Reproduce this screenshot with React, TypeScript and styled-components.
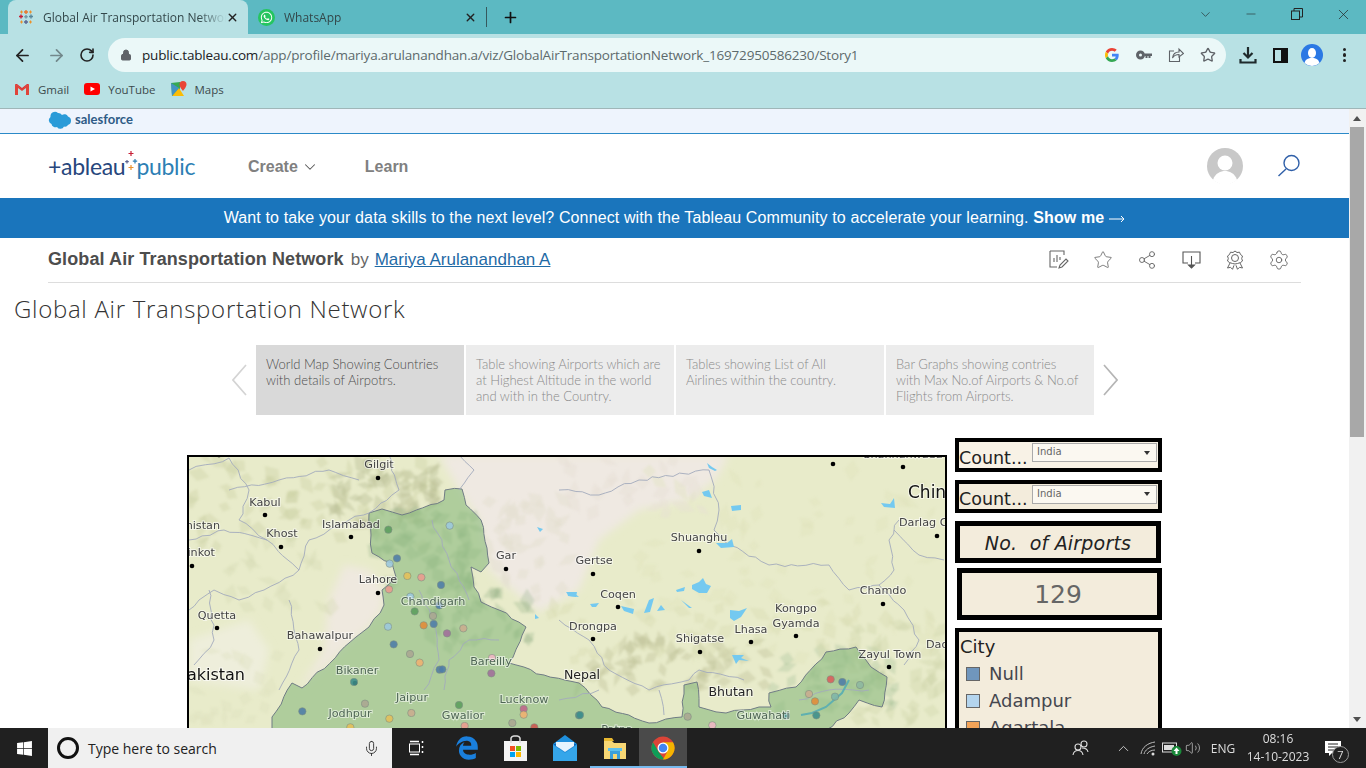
import React from "react";
import styled, { createGlobalStyle } from "styled-components";
import { ArrowLeft, ArrowRight, RotateCw, Lock, Star, X, Plus, ChevronDown, Minus, Mic, Share2, Settings, ChevronUp, Volume2 } from "lucide-react";
import { FaWindows, FaEdgeLegacy, FaWhatsapp } from "react-icons/fa";

const Global = createGlobalStyle`
  html, body { margin: 0; padding: 0; height: 768px; overflow: hidden; background: #fff; }
  * { box-sizing: border-box; }
  #root { font-family: "Open Sans", "Liberation Sans", sans-serif; }
`;

const Screen = styled.div`width:1366px;height:768px;display:flex;flex-direction:column;overflow:hidden;`;
const TabStrip = styled.div`height:34px;background:#5cb9c2;display:flex;align-items:stretch;padding-left:8px;flex:none;`;
const Tab = styled.div<{ $active?: boolean; $w: number }>`
  width:${p => p.$w}px;display:flex;align-items:center;padding:0 9px 0 10px;font-size:12px;color:#33474a;
  background:${p => (p.$active ? "#b8e1e4" : "transparent")};border-radius:8px 8px 0 0;
`;
const TabTitle = styled.span`flex:1;margin-left:9px;white-space:nowrap;overflow:hidden;-webkit-mask-image:linear-gradient(90deg,#000 85%,transparent);`;
const WaBadge = styled.span`width:17px;height:17px;border-radius:50%;background:#25c560;display:flex;align-items:center;justify-content:center;color:#fff;flex:none;`;
const TabSep = styled.div`width:1px;height:20px;background:#36595d;align-self:center;`;
const NewTab = styled.div`width:46px;display:flex;align-items:center;justify-content:center;color:#111;`;
const WinControls = styled.div`margin-left:auto;display:flex;align-items:flex-start;color:#222;`;
const WinBtn = styled.div`width:46px;height:28px;display:flex;align-items:center;justify-content:center;`;

const Toolbar = styled.div`height:42px;background:#b8e1e4;display:flex;align-items:center;flex:none;padding-left:3px;`;
const NavBtn = styled.div<{ $w: number; $c?: string }>`width:${p => p.$w}px;display:flex;justify-content:center;align-items:center;color:${p => p.$c ?? "#222"};flex:none;`;
const Omnibox = styled.div`width:1118px;height:34px;margin-left:6px;border-radius:17px;background:#ebf8f8;display:flex;align-items:center;padding-left:12px;flex:none;`;
const Url = styled.div`font-size:13.5px;color:#5d6a6c;margin-left:10px;flex:1;white-space:nowrap;letter-spacing:-.19px;b{font-weight:400;color:#202124;}`;
const OmniIcon = styled.div`width:32px;display:flex;justify-content:center;align-items:center;color:#5f6368;`;
const OmniIcons = styled.div`display:flex;margin-right:2px;`;
const ToolRight = styled.div`display:flex;margin-left:6px;`;
const Menu = styled.div`display:flex;flex-direction:column;gap:2px;span{width:3.5px;height:3.5px;border-radius:50%;background:#222;}`;

const Bookmarks = styled.div`height:33px;background:#b8e1e4;border-bottom:1px solid #9fb6b8;display:flex;align-items:center;padding:0 0 6px 14px;flex:none;font-size:11.5px;color:#3c4a4c;`;
const Bookmark = styled.div`display:flex;align-items:center;gap:8px;margin-right:15px;`;

const Viewport = styled.div`flex:1;display:flex;min-height:0;`;
const Page = styled.div`width:1349px;display:flex;flex-direction:column;overflow:hidden;background:#fff;`;
const Scrollbar = styled.div`width:17px;background:#f1f1f1;display:flex;flex-direction:column;align-items:center;padding:0 2px 0 1px;`;
const ArrowBtn = styled.div`height:18px;display:flex;align-items:center;justify-content:center;flex:none;width:100%;
  &::after{content:"";border-left:4px solid transparent;border-right:4px solid transparent;}`;
const ArrowUp = styled(ArrowBtn)`&::after{border-bottom:5px solid #505050;}`;
const ArrowDown = styled(ArrowBtn)`margin-top:auto;&::after{border-top:5px solid #505050;}`;
const Thumb = styled.div`width:100%;height:310px;background:#a8a8a8;flex:none;`;

const SfStrip = styled.div`height:25px;background:#eef4fd;border-bottom:1px solid #2b8ac8;padding-left:48px;display:flex;align-items:center;flex:none;gap:3px;`;
const SfText = styled.span`font:700 13px "Lato","Liberation Sans",sans-serif;color:#2e5b86;margin-top:-5px;`;
const SfCloud = styled.svg`margin-top:-3px;`;

const Nav = styled.div`height:64px;display:flex;align-items:center;padding-left:48px;flex:none;`;
const Logo = styled.div`width:200px;display:flex;align-items:center;font:400 23px "Lato","Open Sans",sans-serif;letter-spacing:-.3px;`;
const LogoA = styled.span`color:#27467c;`;
const LogoB = styled.span`color:#2d7fb4;`;
const SparkSvg = styled.svg`margin:-6px -4px 0 -3px;flex:none;`;
const NavLink = styled.div<{ $ml: number }>`margin-left:${p => p.$ml}px;padding-top:2px;font:700 16px "Liberation Sans",sans-serif;color:#808080;display:flex;align-items:center;gap:3px;svg{color:#555;}`;
const NavRight = styled.div`margin-left:auto;margin-right:48px;display:flex;align-items:center;gap:34px;`;
const Avatar = styled.svg`display:block;`;

const Banner = styled.div`height:40px;background:#1a75bc;color:#fff;display:flex;align-items:center;justify-content:center;font:400 16px "Liberation Sans",sans-serif;flex:none;letter-spacing:.12px;white-space:pre;b{margin-left:0;}`;
const BannerArrow = styled.svg`margin:2px 0 0 5px;`;
const TitleRow = styled.div`height:45px;margin:0 48px;width:1253px;border-bottom:1px solid #ddd;display:flex;align-items:center;flex:none;padding-bottom:1px;`;
const VizName = styled.div`font:700 18px "Liberation Sans",sans-serif;color:#4d4d4d;letter-spacing:.1px;`;
const By = styled.span`font:400 17px "Liberation Sans",sans-serif;color:#666;margin-left:7px;`;
const Author = styled.a`font:400 17px "Liberation Sans",sans-serif;color:#1f6aa5;text-decoration:underline;margin-left:6px;`;
const VizTools = styled.div`margin-left:auto;margin-right:12px;display:flex;gap:24px;color:#666;svg{display:block;}`;
const Gear = styled(Settings)`margin:-1px;`;

const StoryTitle = styled.div`height:52px;padding:0 0 2px 14px;display:flex;align-items:center;font:300 24px "Open Sans",sans-serif;color:#333;flex:none;letter-spacing:.7px;`;
const StoryNav = styled.div`height:70px;margin-top:10px;display:flex;align-items:center;padding-left:226px;gap:2px;flex:none;`;
const StoryArrow = styled.div`width:28px;display:flex;justify-content:center;`;
const StoryPoint = styled.div<{ $active?: boolean }>`width:208px;height:70px;padding:11px 10px 0;white-space:nowrap;background:${p => (p.$active ? "#d9d9d9" : "#ececec")};
  color:${p => (p.$active ? "#4d4d4d" : "#8a8a8a")};font:300 13px/16px "Lato","Open Sans",sans-serif;`;

const Dashboard = styled.div`flex:none;display:flex;align-items:flex-start;padding:23px 0 0 187px;`;
const MapFrame = styled.div`width:760px;height:300px;margin-top:17px;border:2px solid #000;flex:none;svg{display:block;}`;
const Side = styled.div`margin-left:8px;width:207px;display:flex;flex-direction:column;flex:none;`;
const Panel = styled.div<{ $h: number; $mt: number; $ml?: number; $w?: number; $bg?: string; $b?: number }>`
  height:${p => p.$h}px;margin-top:${p => p.$mt}px;margin-left:${p => p.$ml ?? 0}px;width:${p => p.$w ?? 207}px;
  border:${p => p.$b ?? 4}px solid #000;background:${p => p.$bg ?? "#f3ecdc"};display:flex;align-items:center;flex:none;
  font-family:"DejaVu Sans",sans-serif;color:#222;
`;
const FilterLabel = styled.span`font-size:17.5px;width:73px;flex:none;padding-top:5px;white-space:nowrap;`;
const Select = styled.div`width:125px;height:19px;border:1px solid #aaa;background:#fbf8f1;font-size:10px;color:#666;display:flex;align-items:center;justify-content:space-between;padding:0 6px 2px 4px;margin-top:-5px;
  &::after{content:"";border-left:3.5px solid transparent;border-right:3.5px solid transparent;border-top:4px solid #333;margin-top:2px;}`;
const CardTitle = styled.div`width:100%;text-align:center;font-style:italic;font-size:19px;letter-spacing:.2px;color:#222;white-space:pre;padding-top:1px;`;
const BigNum = styled.div`width:100%;text-align:center;font-size:25px;color:#666;padding-right:3px;`;
const Legend = styled(Panel)`flex-direction:column;align-items:flex-start;padding:2px 1px 0;`;
const LegendHead = styled.div`font-size:18px;line-height:26px;`;
const LegendRow = styled.div`display:flex;align-items:center;height:27px;padding-left:6px;gap:9px;font-size:18px;color:#45474f;`;
const Swatch = styled.span<{ $c: string }>`width:14px;height:14px;background:${p => p.$c};border:1px solid #666;flex:none;`;

const Taskbar = styled.div`height:40px;background:#202020;display:flex;align-items:stretch;flex:none;color:#fff;`;
const Cell = styled.div<{ $w: number; $active?: boolean; $line?: boolean }>`width:${p => p.$w}px;flex:none;display:flex;align-items:center;justify-content:center;
  background:${p => (p.$active ? "#4a4a4a" : "transparent")};box-shadow:${p => (p.$line ? "inset 0 -2px 0 #76b9ed" : "none")};`;
const SearchBox = styled.div`width:344px;background:#f0f0f0;display:flex;align-items:center;padding-left:9px;color:#222;font-size:14px;flex:none;`;
const SearchRing = styled.div`width:22px;height:22px;border:3px solid #111;border-radius:50%;margin-right:9px;`;
const SearchMic = styled.div`margin-left:auto;margin-right:12px;display:flex;`;
const Tray = styled.div`margin-left:auto;display:flex;align-items:center;`;
const TrayItem = styled.div<{ $w: number }>`width:${p => p.$w}px;display:flex;justify-content:center;align-items:center;font-size:12px;flex:none;color:#ddd;`;
const Clock = styled.div`width:70px;text-align:center;font-size:12px;line-height:18px;color:#ddd;`;
const NoteBadge = styled.div`position:absolute;right:-8px;bottom:-7px;width:17px;height:17px;border-radius:50%;border:1px solid #999;background:#222;font-size:11px;line-height:15px;text-align:center;color:#ddd;`;
const NoteWrap = styled.div`position:relative;display:flex;`;

let seed = 12345;
const rnd = () => { seed = (seed * 16807) % 2147483647; return seed / 2147483647; };
const parse = (s: string) => s.trim().split(/\s+/).map(p => p.split(",").map(Number));
const wiggle = (s: string, amp: number, step = 7) => {
  const pts = parse(s); const out: string[] = [];
  pts.forEach((p, i) => {
    out.push(p.join(","));
    const q = pts[i + 1]; if (!q) return;
    const d = Math.hypot(q[0] - p[0], q[1] - p[1]); const n = Math.floor(d / step);
    for (let k = 1; k < n; k++) {
      const t = k / n;
      out.push(`${(p[0] + (q[0] - p[0]) * t + (rnd() - .5) * amp * 2).toFixed(1)},${(p[1] + (q[1] - p[1]) * t + (rnd() - .5) * amp * 2).toFixed(1)}`);
    }
  });
  return out.join(" ");
};
type Facet = { d: string; c: string; o: number };
const zones: [number, number, number, number, number, string, number][] = [
  [190, 457, 250, 90, 70, "#c6cca0", .32],
  [330, 457, 110, 70, 50, "#b9bf95", .42],
  [230, 540, 110, 70, 22, "#d2d7ae", .3],
  [560, 640, 210, 50, 55, "#bcc196", .38],
  [370, 510, 110, 80, 45, "#7fa376", .25],
  [430, 590, 100, 60, 30, "#7fa376", .25],
  [770, 650, 130, 60, 40, "#7fa376", .2],
  [640, 470, 300, 190, 70, "#dfe3ba", .35],
  [540, 600, 400, 60, 40, "#d6dab0", .35],
  [850, 620, 96, 108, 40, "#cfd4a8", .35],
  [480, 500, 90, 100, 35, "#e3ddcf", .45],
  [560, 457, 150, 60, 25, "#e5dfd4", .4],
  [190, 650, 90, 78, 20, "#d9deb8", .3],
];
const facets: Facet[] = zones.flatMap(([x, y, w, h, n, c, o]) =>
  Array.from({ length: n }, () => {
    const cx = x + rnd() * w, cy = y + rnd() * h, a = rnd() * 3.14, l = 5 + rnd() * 8, t = 3 + rnd() * 5;
    const dx = Math.cos(a) * l, dy = Math.sin(a) * l, nx = -Math.sin(a) * t, ny = Math.cos(a) * t;
    return { d: `${(cx - dx).toFixed(1)},${(cy - dy).toFixed(1)} ${(cx + nx).toFixed(1)},${(cy + ny).toFixed(1)} ${(cx + dx).toFixed(1)},${(cy + dy).toFixed(1)} ${(cx - nx).toFixed(1)},${(cy - ny).toFixed(1)}`, c, o };
  }));

const dots: [number, number][] = [[379,478],[266,515],[282,547],[352,537],[193,566],[379,593],[218,628],[321,649],[507,569],[700,551],[594,574],[619,607],[594,639],[701,652],[752,642],[797,636],[884,604],[938,536],[834,464],[904,467],[890,667],[220,455],[356,683]];
const B="#4f7ea8",L="#9cc8dd",G="#5d9e5f",S="#e99c8f",T="#3f8f8c",Y="#e3c05b",TN="#c9ad8f",GR="#aaa793",P="#a0709a",PE="#eeb172";
const z6: [number, number, string][] = [[628,239,G],[812,227,L],[654,325,B],[632,341,L],[685,378,Y],[727,382,S],[786,405,B],[630,418,S],[694,440,L],[781,466,B],[707,484,G],[762,498,GR],[734,526,"#e08c3a"],[764,522,B],[627,530,L],[853,535,TN],[804,550,P],[644,583,B],[693,612,GR],[722,638,PE],[782,659,B],[790,658,B],[939,624,"#eeb7c4"],[937,670,P],[525,696,T],[558,761,GR],[370,784,B],[697,789,TN],[840,765,G],[631,806,Y],[1034,777,"#c0668b"],[1034,794,PE],[1000,819,GR],[857,828,S],[1066,832,"#c9564f"],[514,832,Y],[1200,796,T]];
const z7: [number, number, string][] = [[63,795,T],[815,688,"#d9605c"],[850,696,B],[903,705,"#8db8a0"],[750,732,TN],[828,740,"#7fb5a8"],[768,754,"#e08c3a"],[681,797,T],[772,796,T],[386,800,GR],[460,826,"#eeb7c4"]];
const markers = [...z6.map(([x,y,c])=>[180+x/3,450+y/3,c] as const),...z7.map(([x,y,c])=>[560+x/3,450+y/3,c] as const)];
type Lb = [string, number, number, string?, number?, string?];
const labels: Lb[] = [
 ["Gilgit",380,464],["Kabul",266,502],["Khost",283,533],["Afghanistan",221,525,"end"],["Islamabad",352,524],["Zhinkot",216,552,"end"],["Lahore",379,579],
 ["Quetta",218,615],["Bahawalpur",321,635],["Pakistan",246,674,"end",16,"#111"],["Gar",507,555],["Shuanghu",700,537],["Gertse",595,560],["Coqen",619,594],["Drongpa",594,626],
 ["Shigatse",701,638],["Lhasa",752,629],["Kongpo",797,608],["Gyamda",797,623],["Chamdo",884,590],["Darlag County",900,522,"start"],["China",909,492,"start",17,"#111"],["Shannanwada",904,454],
 ["Dadu",927,644,"start"],["Zayul Town",891,654],["Nepal",583,675,"middle",12.5,"#222"],["Bhutan",732,692,"middle",12.5,"#222"],
 ["Chandigarh",434,601,"middle",11.2,"#4e6654"],["Bikaner",358,670,"middle",11.2,"#4e6654"],["Bareilly",492,661,"middle",11.2,"#4e6654"],["Jaipur",413,697,"middle",11.2,"#4e6654"],["Jodhpur",351,713,"middle",11.2,"#4e6654"],["Gwalior",464,715,"middle",11.2,"#4e6654"],["Lucknow",525,699,"middle",11.2,"#4e6654"],["Guwahati",764,715,"middle",11.2,"#4e6654"],["Patna",618,729,"middle",11.2,"#4e6654"],
];
const lakes = ["708,463 713,467 718,470 716,471 710,468","703,492 710,490 713,498 705,496","732,506 742,505 742,510 733,511","882,503 891,504 895,498 896,508 885,507","717,543 728,543 733,539 735,547 722,548","693,585 700,582 704,578 707,584 712,586 708,593 700,593 693,589","677,590 686,587 685,591 678,592","567,592 574,592 580,597 570,596","591,604 600,603 597,607 593,607","622,606 635,609 634,614 625,611","650,600 655,598 651,612 645,613","658,611 662,605 666,610","682,600 693,608 690,608","731,610 740,611 748,608 742,617 735,621 731,618","538,527 544,529 541,532","568,592 578,592 577,597 569,596","536,614 540,618 536,619","733,655 745,655 742,658 750,661 740,660 737,664"];
const india = wiggle("446,490 463,489 467,505 482,520 490,563 482,572 472,567 475,587 482,602 500,610 527,627 510,663 545,675 580,683 603,707 650,723 683,717 685,685 698,682 700,707 727,713 760,707 772,707 770,693 797,687 827,652 857,647 872,667 888,677 883,707 860,700 850,713 827,730 273,730 273,717 293,683 303,688 357,637 370,627 385,605 383,590 397,577 393,563 373,553 372,535 370,513 383,509 403,515 445,500", 1.2);
const borders = ["190,470 230,458 250,490 240,520 268,540 300,570 265,590 240,600 215,590 200,600 190,610","390,455 400,490 370,513","460,455 475,470 460,490","560,490 600,495 640,480 710,470 720,510 715,530 730,545 770,565 830,565 850,590 880,585 905,610 920,640 905,665","560,620 590,640 610,670 650,690 690,680 700,670 745,680","900,520 890,540 895,570 880,585","945,560 920,555 895,530","230,490 280,480 330,470 360,480","300,570 310,540 350,520 370,513","433,520 450,560 470,600","420,590 435,625 440,660 425,690","500,640 470,640 450,660 445,690","560,700 600,690","190,540 225,530 268,540","210,590 215,640 195,665","290,600 300,650 280,690","660,690 665,715","800,700 830,690 870,690"].map(b => wiggle(b, 1.6));
const Terrain = () => (
  <g>
    <g filter="url(#soft)">
      <polygon points="440,455 730,455 716,480 690,500 640,510 600,540 580,590 540,612 490,570 480,520 460,490" fill="#efe9e2"/>
      <polygon points="300,690 325,650 330,600 345,565 370,570 385,590 383,610 370,627 350,645 303,688" fill="#efe9df"/>
      <polygon points="190,640 250,620 270,650 260,690 190,680" fill="#eeeedb"/>
    </g>
    <g filter="url(#facet)">
      {facets.map((f, i) => <polygon key={i} points={f.d} fill={f.c} opacity={f.o}/>)}
    </g>
  </g>
);
const WorldMap = () => (
  <svg width="756" height="296" viewBox="190 457 756 296">
    <defs>
      <filter id="soft"><feGaussianBlur stdDeviation="4"/></filter>
      <filter id="facet"><feGaussianBlur stdDeviation=".8"/></filter>
    </defs>
    <rect x="190" y="457" width="756" height="296" fill="#e8ebca"/>
    <Terrain/>
    <polygon points={india} fill="#8fbb82" fillOpacity=".64" stroke="#6f7b84" strokeWidth="1"/>
    {borders.map((b,i)=><polyline key={i} points={b} fill="none" stroke="#a3aabc" strokeWidth=".9"/>)}
    {lakes.map((l,i)=><polygon key={i} points={l} fill="#74c9f0"/>)}
    <polyline points="802,715 813,713 827,707 843,693 850,680" fill="none" stroke="#5fb0b0" strokeWidth="2"/>
    {dots.map(([x,y],i)=><circle key={i} cx={x} cy={y} r="2.3" fill="#000"/>)}
    {markers.map(([x,y,c],i)=><circle key={i} cx={x} cy={y} r="3.7" fill={c} stroke="#7a8a80" strokeWidth=".6" opacity=".9"/>)}
    {labels.map(([t,x,y,a,s,c],i)=>(
      <text key={i} x={x} y={y+(s&&s>13?6:4)} textAnchor={(a as any)??"middle"} fontFamily="DejaVu Sans, sans-serif" fontSize={s??11.2} fill={c??"#444"}
        stroke="#fff" strokeOpacity=".55" strokeWidth="2" paintOrder="stroke">{t}</text>
    ))}
  </svg>
);

const TableauMark = ({s=16}:{s?:number}) => (
  <svg width={s} height={s} viewBox="0 0 16 16" strokeWidth="1.4">
    <path d="M8 1v4M6 3h4" stroke="#e8762c"/><path d="M8 11v4M6 13h4" stroke="#5b6591"/>
    <path d="M3 5.500v4M1 7.500h4" stroke="#c72037"/><path d="M13 5.500v4M11 7.500h4" stroke="#59879b"/>
    <path d="M3.500 1.500v3M2 3h3M12.500 1.500v3M11 3h3M3.500 11.500v3M2 13h3M12.500 11.500v3M11 13h3" stroke="#eb912b" strokeWidth="1"/>
    <path d="M8 6v3.500M6.300 7.700h3.400" stroke="#7099a6"/>
  </svg>
);
const GLogo = () => (
  <svg width="14" height="14" viewBox="0 0 48 48"><path fill="#EA4335" d="M24 9.500c3.500 0 6.700 1.200 9.200 3.600l6.900-6.900C35.900 2.400 30.500 0 24 0 14.600 0 6.500 5.400 2.600 13.200l8 6.200C12.400 13.700 17.700 9.500 24 9.500z"/><path fill="#4285F4" d="M47 24.500c0-1.600-.1-3.100-.4-4.500H24v9h12.900c-.6 3-2.200 5.500-4.800 7.200l7.700 6c4.500-4.200 7.200-10.300 7.200-17.700z"/><path fill="#FBBC05" d="M10.600 28.600c-.5-1.500-.8-3-.8-4.600s.3-3.200.8-4.600l-8-6.200C.9 16.500 0 20.100 0 24s.9 7.500 2.600 10.800l8-6.200z"/><path fill="#34A853" d="M24 48c6.500 0 11.900-2.100 15.900-5.800l-7.700-6c-2.200 1.400-4.900 2.300-8.200 2.300-6.300 0-11.600-4.200-13.400-9.900l-8 6.200C6.500 42.600 14.600 48 24 48z"/></svg>
);
const ChromeLogo = () => (
  <svg width="24" height="24" viewBox="0 0 48 48"><circle cx="24" cy="24" r="23" fill="#db4437"/><path fill="#0f9d58" d="M24 47A23 23 0 0 1 4 12.500l12 20.500 11 14z"/><path fill="#f4b400" d="M24 47a23 23 0 0 0 20-34.500H24l8 20z"/><circle cx="24" cy="24" r="11" fill="#fff"/><circle cx="24" cy="24" r="8.500" fill="#4285f4"/></svg>
);
const Key = () => <svg width="16" height="16" viewBox="0 0 16 16" fill="#5f6368"><path d="M4.500 3.500a4.500 4.500 0 1 1 0 9 4.500 4.500 0 0 1 0-9zm0 3a1.500 1.500 0 1 0 0 3 1.500 1.500 0 0 0 0-3z"/><path d="M8.500 6.500H16v2.500h-1.500v2h-2V9h-1v2h-2V9h-1z"/></svg>;
const ShareBox = () => <svg width="16" height="16" viewBox="0 0 16 16" fill="none" stroke="#5f6368" strokeWidth="1.100"><path d="M6 4H1.500v10.500h10V10"/><path d="M4.500 11c.5-4 3-6 6.500-6V2l4.500 4.500L11 10V7.500c-3 0-5 1-6.500 3.500z"/></svg>;
const Dl = () => <svg width="18" height="18" viewBox="0 0 18 18" fill="none" stroke="#1f2a2c" strokeWidth="2.200"><path d="M9 1v10M4.500 7 9 11.500 13.500 7"/><path d="M1.500 13v3.500h15V13"/></svg>;
const SidePanel = () => <svg width="15" height="15" viewBox="0 0 15 15"><rect x="1" y="1" width="13" height="13" fill="none" stroke="#111" strokeWidth="2"/><rect x="8" y="1" width="6" height="13" fill="#111"/></svg>;
const Profile = () => <svg width="22" height="22" viewBox="0 0 22 22"><circle cx="11" cy="11" r="11" fill="#2a78e4"/><ellipse cx="11" cy="9" rx="4" ry="5" fill="#fff"/><path d="M3.500 19c1-4 4-4.500 5.500-5h4c1.500.500 4.500 1 5.500 5a11 11 0 0 1-15 0z" fill="#fff"/></svg>;
const Restore = () => <svg width="12" height="12" viewBox="0 0 12 12" fill="none" stroke="#222"><rect x=".5" y="3" width="8" height="8.500"/><path d="M3 3V.5h8.500V9H8.500"/></svg>;
const Gmail = () => <svg width="16" height="12" viewBox="0 0 16 12"><path d="M1 1v11h3V5l4 3 4-3v7h3V1l-7 5z" fill="#e0443a"/><path d="M1 1h2l5 4 5-4h2L8 6.500z" fill="#d33"/></svg>;
const YouTube = () => <svg width="16" height="12" viewBox="0 0 16 12"><rect width="16" height="12" rx="3" fill="#f00"/><path d="M6.500 3.500 11 6l-4.500 2.500z" fill="#fff"/></svg>;
const Maps = () => <svg width="16" height="16" viewBox="0 0 16 16"><path d="M0 2l9-1v14H1z" fill="#35a853"/><path d="M1 15 8 7l5 8z" fill="#fbbc05"/><path d="M0 2l8 5-7 8z" fill="#4a8af4" opacity=".7"/><path d="M12 0a3.500 3.500 0 0 1 3.500 3.500C15.500 6 12 10 12 10S8.500 6 8.500 3.500A3.500 3.500 0 0 1 12 0z" fill="#ea4335"/></svg>;
const Cloud = () => <SfCloud width="24" height="18" viewBox="0 0 24 18"><path d="M10 2a4.500 4.500 0 0 1 4 2 4 4 0 0 1 6 1.500A4.500 4.500 0 0 1 20 14a3.500 3.500 0 0 1-4 1.500 4 4 0 0 1-7 .5A4 4 0 0 1 3.500 13 4 4 0 0 1 2.500 6 4.500 4.500 0 0 1 10 2z" fill="#2a9bd8"/></SfCloud>;
const Spark = () => (
  <SparkSvg width="18" height="26" viewBox="0 0 18 26" fill="none" strokeWidth="1.200">
    <path d="M9 1v5M6.500 3.500h5" stroke="#c72037"/><path d="M13 9v4.500M10.800 11.200h4.400" stroke="#2d7fb4"/><path d="M9 15v5M6.500 17.500h5" stroke="#eb912b"/><path d="M5 10v3.500M3.200 11.700h3.600" stroke="#5b6591"/>
  </SparkSvg>
);
const SearchGlass = () => <svg width="24" height="24" viewBox="0 0 24 24" fill="none" stroke="#2f5fa8" strokeWidth="1.400"><circle cx="14.500" cy="9" r="7.500"/><path d="M9 15 1.500 22"/></svg>;
const VizEdit = () => <svg width="20" height="20" viewBox="0 0 20 20" fill="none" stroke="#666" strokeWidth="1.100"><path d="M1 1h14v4M1 1v16h7"/><path d="M5 12V8M8 12V5M11 10V7" /><path d="M10 18l1-3 6-6 2 2-6 6z"/></svg>;
const Device = () => <svg width="20" height="20" viewBox="0 0 20 20" fill="none" stroke="#555" strokeWidth="1.100"><path d="M7 13H2V2h17v11h-5"/><path d="M10.500 6v9"/><path d="M7.500 15h6l-3 3z" fill="#555"/></svg>;
const Badge = () => <svg width="20" height="20" viewBox="0 0 20 20" fill="none" stroke="#666" strokeWidth="1"><circle cx="10" cy="8" r="3.500"/><path d="M10 1l2 1.500 2.500-.3 1 2.300 2 1.500-.8 2.500.8 2.500-2 1.500-3 1-2.500.5-2.500-.5-3-1-2-1.500.8-2.500-.8-2.500 2-1.500 1-2.300 2.500.3z"/><path d="M5 13l-2.500 5 3-.7 2 2 1.500-4M15 13l2.500 5-3-.7-2 2-1.500-4"/></svg>;
const TaskView = () => <svg width="16" height="16" viewBox="0 0 16 16" fill="none" stroke="#fff"><rect x=".5" y="4" width="10" height="8"/><path d="M1 1.500h9M1 14.500h9M13.500 1v2M13.500 6v2M13.500 11v2" strokeWidth="1.500"/></svg>;
const Store = () => <svg width="23" height="26" viewBox="0 0 23 26"><rect x="0" y="6" width="23" height="20" fill="#f4f4f4"/><path d="M7 8V3a3 3 0 0 1 3-2h3a3 3 0 0 1 3 2v5" fill="none" stroke="#ddd" strokeWidth="1.500"/><rect x="6" y="11" width="5" height="5" fill="#f25022"/><rect x="12" y="11" width="5" height="5" fill="#7fba00"/><rect x="6" y="17" width="5" height="5" fill="#00a4ef"/><rect x="12" y="17" width="5" height="5" fill="#ffb900"/></svg>;
const Mail = () => <svg width="24" height="26" viewBox="0 0 24 26"><path d="M0 9 12 0l12 9v17H0z" fill="#1f8fdc"/><path d="M0 9h24L12 17z" fill="#0a60b8"/><path d="M3 7h18v4l-9 6-9-6z" fill="#e6f4ff"/><path d="M0 10l12 8 12-8v16H0z" fill="#35a6ea"/></svg>;
const Explorer = () => <svg width="22" height="22" viewBox="0 0 22 22"><path d="M0 4h8l2 2h12v16H0z" fill="#f7d774"/><path d="M0 1h8l2 3H0z" fill="#e8b830"/><rect x="6" y="14" width="10" height="8" fill="#3aa0dc"/><rect x="9" y="17" width="4" height="5" fill="#f7d774"/><rect x="4" y="11" width="14" height="3" fill="#5cc0ee"/></svg>;
const People = () => <svg width="18" height="18" viewBox="0 0 18 18" fill="none" stroke="#ddd" strokeWidth="1.100"><circle cx="6" cy="8" r="3"/><circle cx="12" cy="5" r="3"/><path d="M1 16c.5-3 2.500-4.500 5-4.500s4.500 1.500 5 4.500M10 9c3 0 5.500 1 6 4"/></svg>;
const Wifi = () => <svg width="16" height="16" viewBox="0 0 16 16" fill="none" stroke="#bbb"><path d="M1 14C2 7 8 3 15 2M4 14c1-4 5-7 11-8M7 14c1-2 4-4 8-4"/><circle cx="13" cy="14" r="1.500" fill="#ddd" stroke="none"/></svg>;
const Battery = () => <svg width="20" height="16" viewBox="0 0 20 16"><rect x=".5" y="3" width="14" height="9" fill="none" stroke="#ddd"/><rect x="2" y="5" width="10" height="5" fill="#ddd"/><circle cx="14.500" cy="11" r="5" fill="#1a8a3a"/><path d="M14.500 7.500l3 3.500h-2v3h-2v-3h-2z" fill="#fff"/></svg>;
const Note = () => <svg width="16" height="15" viewBox="0 0 16 15"><path d="M0 0h16v12H7l-3 3v-3H0z" fill="#fff"/><path d="M3 3h10M3 6h10M3 9h6" stroke="#222"/></svg>;
const BigChevron = ({ right, c }: { right?: boolean; c: string }) => (
  <svg width="16" height="32" viewBox="0 0 16 32" fill="none" stroke={c} strokeWidth="1.700"><polyline points={right ? "2,1 15,16 2,31" : "14,1 1,16 14,31"}/></svg>
);

const points: { lines: string[]; active?: boolean }[] = [
  { lines: ["World Map Showing Countries", "with details of Airpotrs."], active: true },
  { lines: ["Table showing Airports which are", "at Highest Altitude in the world", "and with in the Country."] },
  { lines: ["Tables showing List of All", "Airlines within the country."] },
  { lines: ["Bar Graphs showing contries", "with Max No.of Airports & No.of", "Flights from Airports."] },
];

export default function App() {
  return (
    <Screen>
      <Global/>
      <TabStrip>
        <Tab $active $w={240}><TableauMark/><TabTitle>Global Air Transportation Network</TabTitle><X size={13} strokeWidth={2.5} color="#222"/></Tab>
        <Tab $w={238}><WaBadge><FaWhatsapp size={13}/></WaBadge><TabTitle>WhatsApp</TabTitle><X size={13} strokeWidth={2.5} color="#222"/></Tab>
        <TabSep/>
        <NewTab><Plus size={17} strokeWidth={2.4}/></NewTab>
        <WinControls>
          <WinBtn><ChevronDown size={15} strokeWidth={1}/></WinBtn>
          <WinBtn><Minus size={14} strokeWidth={1}/></WinBtn>
          <WinBtn><Restore/></WinBtn>
          <WinBtn><X size={17} strokeWidth={1}/></WinBtn>
        </WinControls>
      </TabStrip>
      <Toolbar>
        <NavBtn $w={38}><ArrowLeft size={19} strokeWidth={2.2}/></NavBtn>
        <NavBtn $w={30} $c="#72888b"><ArrowRight size={19} strokeWidth={2.2}/></NavBtn>
        <NavBtn $w={31}><RotateCw size={16} strokeWidth={2.4}/></NavBtn>
        <Omnibox>
          <Lock size={12} fill="#5f6368" color="#5f6368"/>
          <Url><b>public.tableau.com</b>/app/profile/mariya.arulanandhan.a/viz/GlobalAirTransportationNetwork_16972950586230/Story1</Url>
          <OmniIcons>
            <OmniIcon><GLogo/></OmniIcon>
            <OmniIcon><Key/></OmniIcon>
            <OmniIcon><ShareBox/></OmniIcon>
            <OmniIcon><Star size={16}/></OmniIcon>
          </OmniIcons>
        </Omnibox>
        <ToolRight>
          <NavBtn $w={32}><Dl/></NavBtn>
          <NavBtn $w={32}><SidePanel/></NavBtn>
          <NavBtn $w={32}><Profile/></NavBtn>
          <NavBtn $w={33}><Menu><span/><span/><span/></Menu></NavBtn>
        </ToolRight>
      </Toolbar>
      <Bookmarks>
        <Bookmark><Gmail/>Gmail</Bookmark>
        <Bookmark><YouTube/>YouTube</Bookmark>
        <Bookmark><Maps/>Maps</Bookmark>
      </Bookmarks>
      <Viewport>
        <Page>
          <SfStrip><Cloud/><SfText>salesforce</SfText></SfStrip>
          <Nav>
            <Logo><LogoA>+ableau</LogoA><Spark/><LogoB>public</LogoB></Logo>
            <NavLink $ml={0}>Create <ChevronDown size={18} strokeWidth={1.4}/></NavLink>
            <NavLink $ml={46}>Learn</NavLink>
            <NavRight>
              <Avatar width="36" height="36" viewBox="0 0 36 36"><circle cx="18" cy="18" r="18" fill="#c8c8c8"/><circle cx="18" cy="15" r="7.500" fill="#fff"/><path d="M6 32c2-7 8-9 12-9s10 2 12 9a18 18 0 0 1-24 0z" fill="#fff"/></Avatar>
              <SearchGlass/>
            </NavRight>
          </Nav>
          <Banner>Want to take your data skills to the next level? Connect with the Tableau Community to accelerate your learning. <b>Show me</b><BannerArrow width="16" height="8" viewBox="0 0 16 8" fill="none" stroke="#fff"><path d="M0 4h15M12 1l3 3-3 3"/></BannerArrow></Banner>
          <TitleRow>
            <VizName>Global Air Transportation Network</VizName>
            <By>by</By>
            <Author>Mariya Arulanandhan A</Author>
            <VizTools>
              <VizEdit/><Star size={20} strokeWidth={1}/><Share2 size={20} strokeWidth={1.1}/><Device/><Badge/><Gear size={22} strokeWidth={1}/>
            </VizTools>
          </TitleRow>
          <StoryTitle>Global Air Transportation Network</StoryTitle>
          <StoryNav>
            <StoryArrow><BigChevron c="#d4d4d4"/></StoryArrow>
            {points.map((pt, i) => (
              <StoryPoint key={i} $active={pt.active}>{pt.lines.map((l, j) => <div key={j}>{l}</div>)}</StoryPoint>
            ))}
            <StoryArrow><BigChevron right c="#b5b5b5"/></StoryArrow>
          </StoryNav>
          <Dashboard>
            <MapFrame><WorldMap/></MapFrame>
            <Side>
              <Panel $h={34} $mt={0} $bg="#f8f2e6"><FilterLabel>Count...</FilterLabel><Select>India</Select></Panel>
              <Panel $h={33} $mt={8}><FilterLabel>Count...</FilterLabel><Select>India</Select></Panel>
              <Panel $h={42} $mt={8} $w={206} $b={5}><CardTitle>{"No.  of Airports"}</CardTitle></Panel>
              <Panel $h={52} $mt={5} $ml={2} $w={205} $b={5}><BigNum>129</BigNum></Panel>
              <Legend $h={120} $mt={8}>
                <LegendHead>City</LegendHead>
                <LegendRow><Swatch $c="#7096bd"/>Null</LegendRow>
                <LegendRow><Swatch $c="#b4d5ee"/>Adampur</LegendRow>
                <LegendRow><Swatch $c="#f4a458"/>Agartala</LegendRow>
              </Legend>
            </Side>
          </Dashboard>
        </Page>
        <Scrollbar>
          <ArrowUp/>
          <Thumb/>
          <ArrowDown/>
        </Scrollbar>
      </Viewport>
      <Taskbar>
        <Cell $w={48}><FaWindows size={17}/></Cell>
        <SearchBox>
          <SearchRing/>Type here to search
          <SearchMic><Mic size={17} strokeWidth={1.2} color="#222"/></SearchMic>
        </SearchBox>
        <Cell $w={50}><TaskView/></Cell>
        <Cell $w={49}><FaEdgeLegacy size={24} color="#1a7fdc"/></Cell>
        <Cell $w={49}><Store/></Cell>
        <Cell $w={50}><Mail/></Cell>
        <Cell $w={49} $line><Explorer/></Cell>
        <Cell $w={48} $active $line><ChromeLogo/></Cell>
        <Tray>
          <TrayItem $w={36}><People/></TrayItem>
          <TrayItem $w={12}/>
          <TrayItem $w={24}><ChevronUp size={17} strokeWidth={1.2}/></TrayItem>
          <TrayItem $w={26}><Wifi/></TrayItem>
          <TrayItem $w={22}><Battery/></TrayItem>
          <TrayItem $w={20}><Volume2 size={16} strokeWidth={1}/></TrayItem>
          <TrayItem $w={40}>ENG</TrayItem>
          <Clock>08:16<br/>14-10-2023</Clock>
          <TrayItem $w={40}><NoteWrap><Note/><NoteBadge>7</NoteBadge></NoteWrap></TrayItem>
          <TrayItem $w={13}/>
        </Tray>
      </Taskbar>
    </Screen>
  );
}
